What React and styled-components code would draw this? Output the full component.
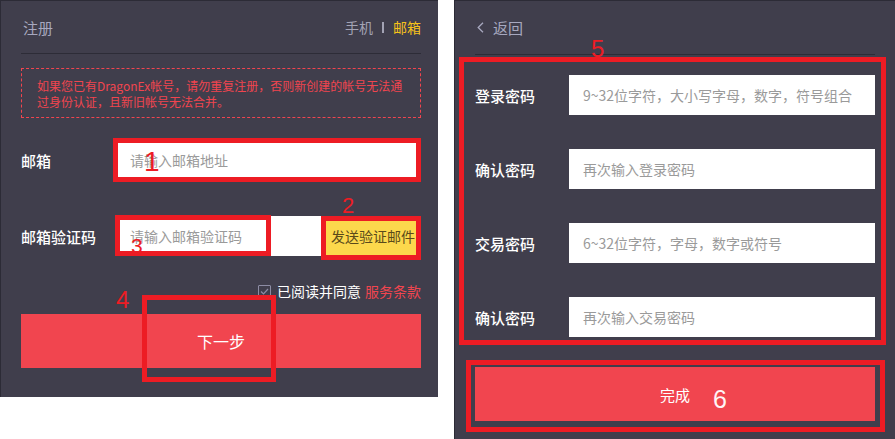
import React from 'react';
import styled, { createGlobalStyle } from 'styled-components';

const Global = createGlobalStyle`
  html, body { margin: 0; padding: 0; background: #ffffff; }
  body { font-family: "Noto Sans CJK SC", "Noto Sans", sans-serif; }
  * { box-sizing: border-box; }
`;

const FONT = `"Noto Sans CJK SC", "Noto Sans", sans-serif`;
const RED = '#f1454f';
const MARK = '#ed1c24';

const Page = styled.div`
  display: flex;
  align-items: flex-start;
  gap: 16px;
  width: 895px;
  height: 439px;
`;

const Panel = styled.section`
  width: ${(p) => p.$w}px;
  height: ${(p) => p.$h}px;
  padding: 0 ${(p) => p.$pr}px 0 20px;
  background: #403e4c;
  border-top: 1px solid #2c2b36;
  border-left: 1px solid #2c2b36;
  display: flex;
  flex-direction: column;
  font-family: ${FONT};
`;

const Header = styled.header`
  height: ${(p) => p.$h}px;
  flex: none;
  border-bottom: 1px solid #2d2c37;
  display: flex;
  align-items: center;
  justify-content: space-between;
  padding-left: 2px;
`;

const Title = styled.h1`
  margin: 0;
  font-size: 15px;
  font-weight: 400;
  color: #a7a8bf;
`;

const Tabs = styled.div`
  display: flex;
  align-items: center;
  font-size: 14px;
`;

const Tab = styled.span`
  color: ${(p) => (p.$active ? '#f7c21b' : '#a3a3b4')};
`;

const TabBar = styled.span`
  display: block;
  width: 2px;
  height: 11px;
  margin: 0 9px 0 9px;
  background: #a3a3b4;
`;

const Notice = styled.div`
  margin-top: 14px;
  height: 50px;
  border: 1px dashed ${RED};
  padding: 9px 0 0 15px;
  color: ${RED};
  font-size: 12px;
  line-height: 16px;
  white-space: nowrap;
`;

const NoticeLine = styled.div`
  height: 16px;
`;

const Row = styled.div`
  display: flex;
  align-items: center;
  height: 40px;
  margin-top: ${(p) => p.$mt}px;
  flex: none;
`;

const Label = styled.label`
  width: ${(p) => p.$w}px;
  flex: none;
  color: #ffffff;
  font-size: 15px;
  font-weight: 500;
`;

const Field = styled.div`
  position: relative;
  flex: 1;
  height: 40px;
  display: flex;
`;

const Input = styled.input`
  flex: 1;
  min-width: 0;
  height: 40px;
  border: none;
  outline: none;
  background: #ffffff;
  padding: 0 0 0 ${(p) => p.$pl}px;
  font-family: ${FONT};
  font-size: 14px;
  color: #333;
  &::placeholder { color: #9a9a9a; }
`;

const SendBtn = styled.button`
  width: 100px;
  flex: none;
  height: 40px;
  border: none;
  background: #fcd84c;
  color: #5a4a1a;
  font-family: ${FONT};
  font-size: 14px;
  padding: 0 0 0 4px;
`;

const Wrap = styled.div`
  position: relative;
  display: flex;
  flex: ${(p) => (p.$grow ? 1 : 'none')};
`;

const AgreeRow = styled.div`
  margin-top: 26px;
  height: 18px;
  display: flex;
  align-items: center;
  justify-content: flex-end;
  font-size: 14px;
  color: #ffffff;
  flex: none;
`;

const Check = styled.span`
  width: 13px;
  height: 13px;
  border: 1px solid #8d8ca4;
  border-radius: 1px;
  margin-right: 6px;
  display: flex;
  align-items: center;
  justify-content: center;
`;

const Terms = styled.span`
  color: ${RED};
  margin-left: 4px;
`;

const Primary = styled.button`
  position: relative;
  width: 100%;
  height: 54px;
  margin-top: ${(p) => p.$mt}px;
  flex: none;
  border: none;
  background: ${RED};
  color: #ffffff;
  font-family: ${FONT};
  font-size: ${(p) => p.$fs}px;
  padding: 0;
`;

const Back = styled.div`
  display: flex;
  align-items: center;
  gap: 9px;
  color: #a7a8bf;
  font-size: 15px;
`;

const Form = styled.div`
  position: relative;
  margin-top: 20px;
  display: flex;
  flex-direction: column;
  gap: 34px;
  flex: none;
`;

const Box = styled.span`
  position: absolute;
  left: ${(p) => p.$l}px;
  top: ${(p) => p.$t}px;
  width: ${(p) => p.$w}px;
  height: ${(p) => p.$h}px;
  border: 5px solid ${MARK};
  pointer-events: none;
`;

const Num = styled.span`
  position: absolute;
  left: ${(p) => p.$l}px;
  top: ${(p) => p.$t}px;
  font-family: "Liberation Sans", Arial, sans-serif;
  font-size: ${(p) => p.$fs}px;
  line-height: 1;
  color: ${(p) => p.$c || MARK};
  pointer-events: none;
`;

const pwRows = [
  ['登录密码', '9~32位字符，大小写字母，数字，符号组合'],
  ['确认密码', '再次输入登录密码'],
  ['交易密码', '6~32位字符，字母，数字或符号'],
  ['确认密码', '再次输入交易密码'],
];

export default function App() {
  return (
    <>
      <Global />
      <Page>
        <Panel $w={438} $h={397} $pr={17}>
          <Header $h={53}>
            <Title>注册</Title>
            <Tabs>
              <Tab>手机</Tab>
              <TabBar />
              <Tab $active>邮箱</Tab>
            </Tabs>
          </Header>
          <Notice>
            <NoticeLine>如果您已有DragonEx帐号，请勿重复注册，否则新创建的帐号无法通</NoticeLine>
            <NoticeLine>过身份认证，且新旧帐号无法合并。</NoticeLine>
          </Notice>
          <Row $mt={22}>
            <Label $w={96}>邮箱</Label>
            <Field>
              <Input $pl={13} placeholder="请输入邮箱地址" />
              <Box $l={-4} $t={-2} $w={308} $h={44} />
              <Num $l={27} $t={8} $fs={28}>1</Num>
            </Field>
          </Row>
          <Row $mt={36}>
            <Label $w={96}>邮箱验证码</Label>
            <Field>
              <Wrap $grow>
                <Input $pl={13} placeholder="请输入邮箱验证码" />
                <Box $l={-2} $t={-1} $w={156} $h={41} />
                <Num $l={14} $t={19} $fs={21}>3</Num>
              </Wrap>
              <Wrap>
                <SendBtn>发送验证邮件</SendBtn>
                <Box $l={0} $t={0} $w={100} $h={44} />
                <Num $l={21} $t={-21} $fs={22}>2</Num>
              </Wrap>
            </Field>
          </Row>
          <AgreeRow>
            <Check>
              <svg width="9" height="7" viewBox="0 0 9 7">
                <path d="M1 3.5 L3.5 6 L8 1" fill="none" stroke="#8d8ca4" strokeWidth="1.2" />
              </svg>
            </Check>
            已阅读并同意<Terms>服务条款</Terms>
          </AgreeRow>
          <Primary $mt={14} $fs={16}>
            下一步
            <Box $l={121} $t={-19} $w={134} $h={87} />
            <Num $l={95} $t={-26} $fs={24}>4</Num>
          </Primary>
        </Panel>

        <Panel $w={441} $h={439} $pr={20}>
          <Header $h={54}>
            <Back>
              <svg width="7" height="11" viewBox="0 0 7 11">
                <path d="M6 0.8 L1.2 5.5 L6 10.2" fill="none" stroke="#a7a8bf" strokeWidth="1.3" />
              </svg>
              返回
            </Back>
          </Header>
          <Form>
            {pwRows.map(([label, ph], i) => (
              <Row key={i} $mt={0}>
                <Label $w={94}>{label}</Label>
                <Field>
                  <Input $pl={14} type="text" placeholder={ph} />
                </Field>
              </Row>
            ))}
            <Box $l={-16} $t={-18} $w={427} $h={288} />
            <Num $l={116} $t={-38} $fs={24}>5</Num>
          </Form>
          <Primary $mt={30} $fs={15}>
            完成
            <Box $l={-9} $t={-7} $w={419} $h={72} />
            <Num $l={238} $t={20} $fs={25} $c="#fff4f6">6</Num>
          </Primary>
        </Panel>
      </Page>
    </>
  );
}
